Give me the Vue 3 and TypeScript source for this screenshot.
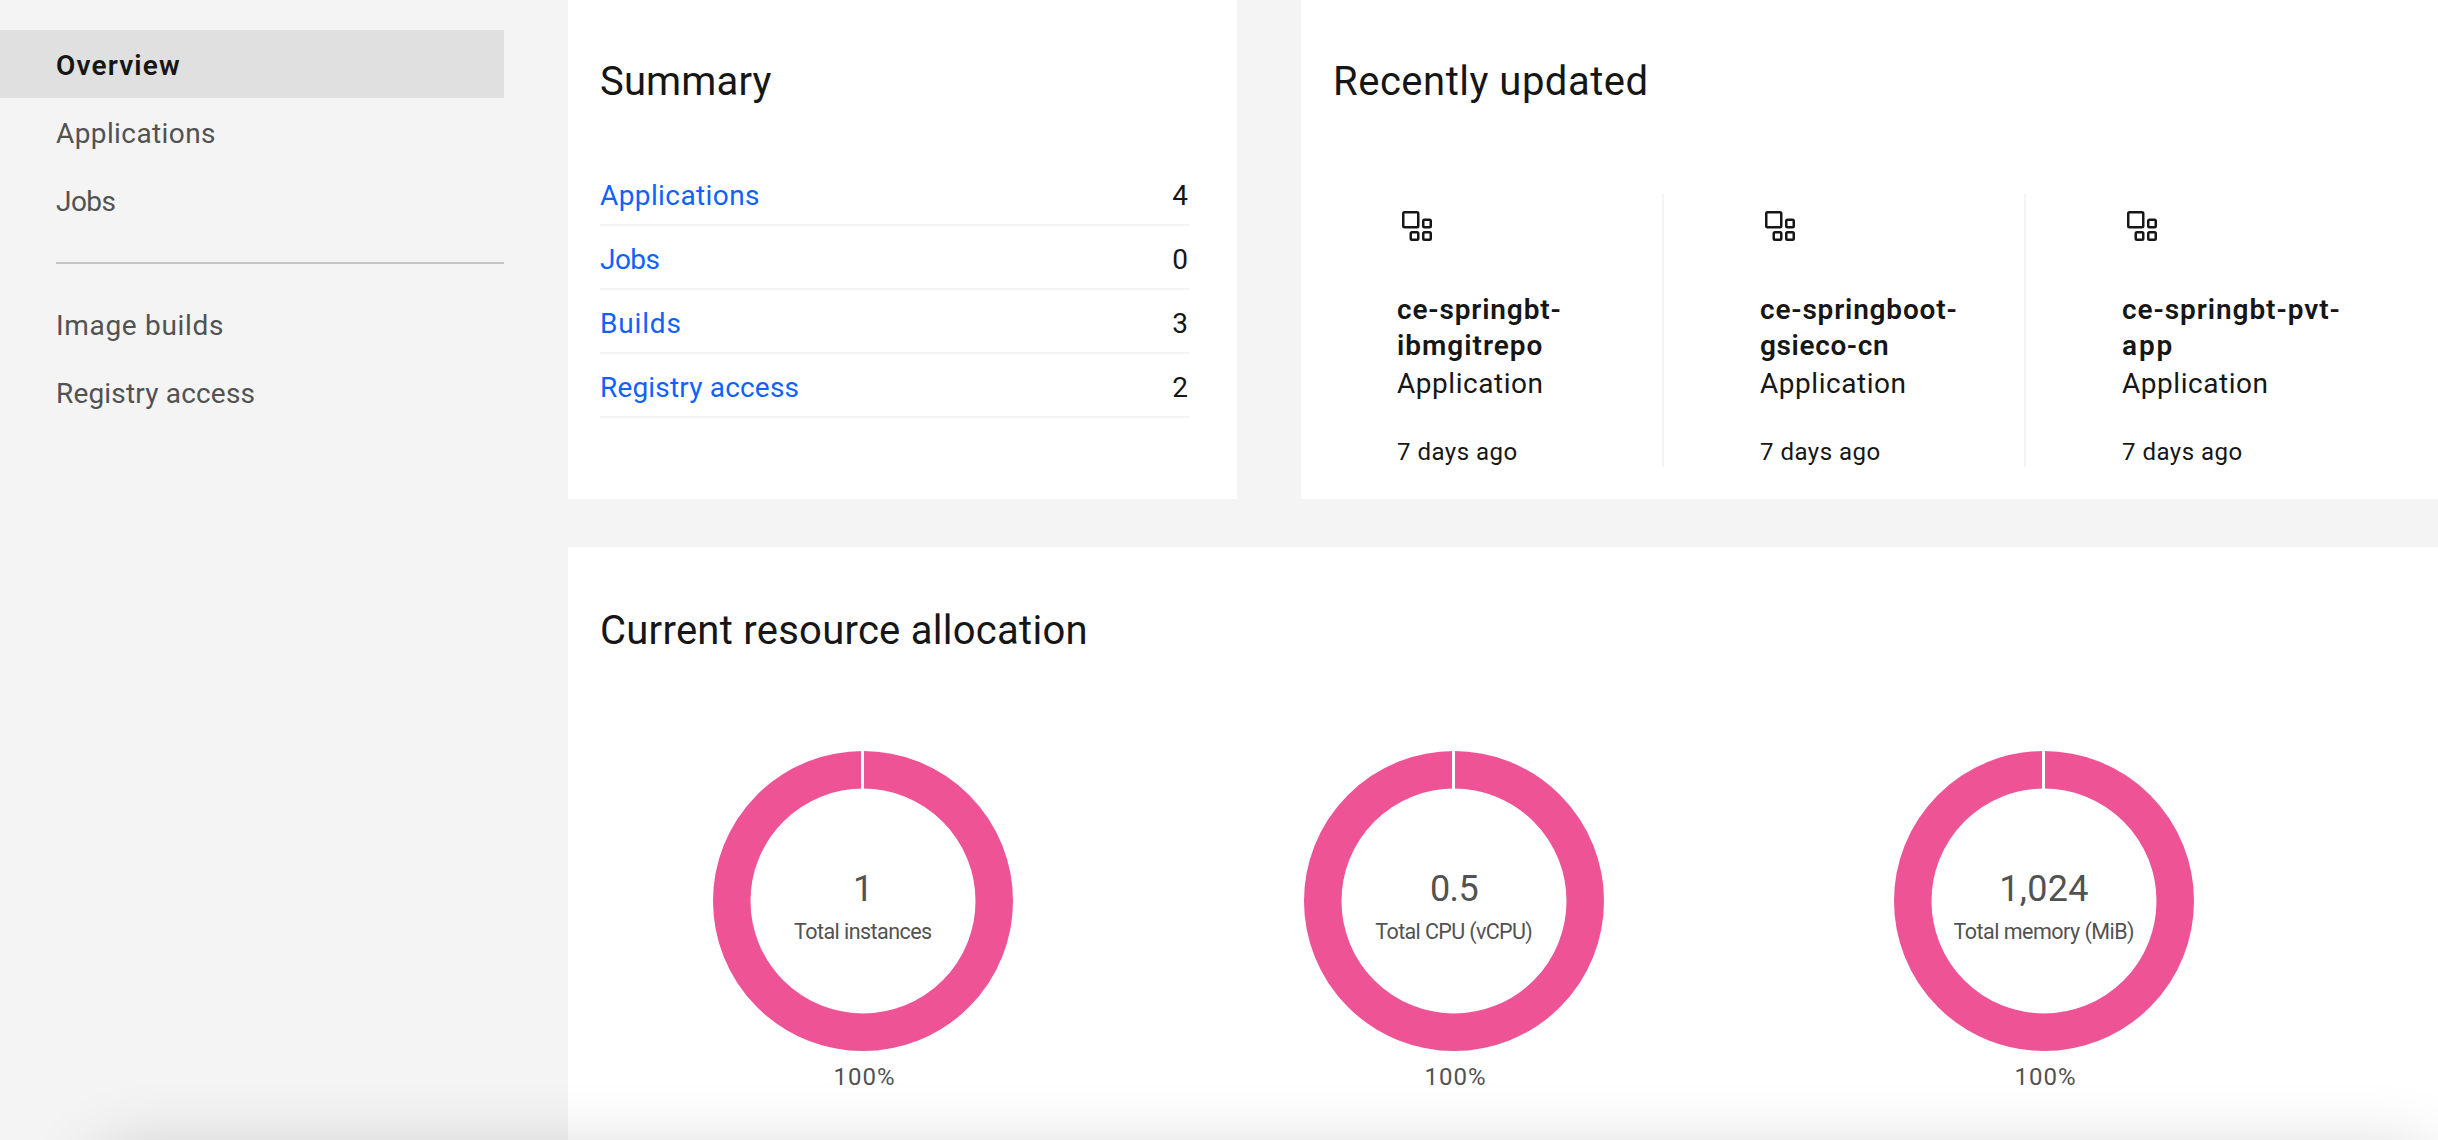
<script setup lang="ts">
import type { Directive } from 'vue'

interface Label {
  text: string
  width: number
}
interface SummaryRow extends Label {
  count: number
}
interface RecentItem {
  name: Label[]
  kind: Label
  updated: Label
}
interface Chart {
  value: string
  valueWidth: number
  label: string
  labelWidth: number
}

// Spreads the letters of a text so that its ink spans the given width in pixels.
const vTrack: Directive<HTMLElement | SVGTextElement, number> = {
  mounted(el, binding) {
    const text = (el.textContent ?? '').trim()
    const ctx = document.createElement('canvas').getContext('2d')
    if (!ctx || text.length < 2) return
    const style = getComputedStyle(el)
    ctx.font = `${style.fontWeight} ${style.fontSize} ${style.fontFamily}`
    const m = ctx.measureText(text)
    const ink = m.actualBoundingBoxLeft + m.actualBoundingBoxRight
    el.style.letterSpacing = `${((binding.value - ink) / (text.length - 1)).toFixed(3)}px`
  },
}

const primaryNav: (Label & { active?: boolean })[] = [
  { text: 'Overview', width: 123, active: true },
  { text: 'Applications', width: 159 },
  { text: 'Jobs', width: 59.5 },
]
const secondaryNav: Label[] = [
  { text: 'Image builds', width: 165 },
  { text: 'Registry access', width: 196.5 },
]

const summary: SummaryRow[] = [
  { text: 'Applications', width: 159, count: 4 },
  { text: 'Jobs', width: 59.5, count: 0 },
  { text: 'Builds', width: 78.5, count: 3 },
  { text: 'Registry access', width: 196.5, count: 2 },
]

const kind: Label = { text: 'Application', width: 144.5 }
const updated: Label = { text: '7 days ago', width: 119.5 }
const recent: RecentItem[] = [
  { name: [{ text: 'ce-springbt-', width: 162.5 }, { text: 'ibmgitrepo', width: 143.5 }], kind, updated },
  { name: [{ text: 'ce-springboot-', width: 195.5 }, { text: 'gsieco-cn', width: 127 }], kind, updated },
  { name: [{ text: 'ce-springbt-pvt-', width: 216.5 }, { text: 'app', width: 48.5 }], kind, updated },
]

const charts: Chart[] = [
  { value: '1', valueWidth: 16, label: 'Total instances', labelWidth: 138 },
  { value: '0.5', valueWidth: 45.5, label: 'Total CPU (vCPU)', labelWidth: 156 },
  { value: '1,024', valueWidth: 86, label: 'Total memory (MiB)', labelWidth: 179.5 },
]
</script>

<template>
  <div class="page">
    <nav class="side">
      <a v-for="n in primaryNav" :key="n.text" class="nav-item" :class="{ active: n.active }">
        <span v-track="n.width">{{ n.text }}</span>
      </a>
      <div class="nav-rule"></div>
      <a v-for="n in secondaryNav" :key="n.text" class="nav-item">
        <span v-track="n.width">{{ n.text }}</span>
      </a>
    </nav>

    <main class="main">
      <div class="top-row">
        <section class="card summary">
          <h2 class="title"><span v-track="170.5">Summary</span></h2>
          <div class="rows">
            <div v-for="r in summary" :key="r.text" class="row">
              <a v-track="r.width" class="link">{{ r.text }}</a>
              <span class="count">{{ r.count }}</span>
            </div>
          </div>
        </section>

        <section class="card recent">
          <h2 class="title"><span v-track="309.5">Recently updated</span></h2>
          <div class="tiles">
            <article v-for="(item, i) in recent" :key="i" class="tile">
              <svg class="icon" viewBox="0 0 32 32" width="40" height="40" fill="#161616">
                <path d="M16 18H6a2 2 0 0 1-2-2V6a2 2 0 0 1 2-2h10a2 2 0 0 1 2 2v10a2 2 0 0 1-2 2ZM6 6v10h10V6Z" />
                <path d="M26 12v4h-4v-4h4m0-2h-4a2 2 0 0 0-2 2v4a2 2 0 0 0 2 2h4a2 2 0 0 0 2-2v-4a2 2 0 0 0-2-2Z" />
                <path d="M26 22v4h-4v-4h4m0-2h-4a2 2 0 0 0-2 2v4a2 2 0 0 0 2 2h4a2 2 0 0 0 2-2v-4a2 2 0 0 0-2-2Z" />
                <path d="M16 22v4h-4v-4h4m0-2h-4a2 2 0 0 0-2 2v4a2 2 0 0 0 2 2h4a2 2 0 0 0 2-2v-4a2 2 0 0 0-2-2Z" />
              </svg>
              <div class="name">
                <div v-for="l in item.name" :key="l.text" v-track="l.width">{{ l.text }}</div>
              </div>
              <div v-track="item.kind.width" class="kind">{{ item.kind.text }}</div>
              <div v-track="item.updated.width" class="updated">{{ item.updated.text }}</div>
            </article>
          </div>
        </section>
      </div>

      <section class="card allocation">
        <h2 class="title"><span v-track="483.5">Current resource allocation</span></h2>
        <div class="charts">
          <svg v-for="c in charts" :key="c.label" class="chart" width="300" height="345" viewBox="0 0 300 345">
            <circle cx="150" cy="150" r="131.25" fill="none" stroke="#ee5396" stroke-width="37.5" />
            <rect x="148" y="-1" width="3" height="40" fill="#fff" />
            <text v-track="c.valueWidth" class="value" x="150" y="150">{{ c.value }}</text>
            <text v-track="c.labelWidth" class="label" x="149.8" y="188">{{ c.label }}</text>
            <text v-track="58.5" class="percent" x="151.5" y="334">100%</text>
          </svg>
        </div>
      </section>
    </main>
    <div class="shade"></div>
  </div>
</template>

<style>
body {
  background: #f4f4f4;
}
</style>

<style scoped>
.page {
  position: relative;
  display: flex;
  width: 2438px;
  height: 1140px;
  overflow: hidden;
  background: #f4f4f4;
  color: #161616;
  font-family: Roboto, "Liberation Sans", sans-serif;
  font-size: 28px;
}
.page * {
  box-sizing: border-box;
}
.side {
  flex: none;
  width: 504px;
  padding-top: 30px;
}
.nav-item {
  display: block;
  height: 68px;
  padding: 3px 0 0 56px;
  line-height: 65px;
  color: #525252;
  white-space: nowrap;
}
.nav-item.active {
  background: #e0e0e0;
  color: #161616;
  font-weight: 600;
}
.nav-rule {
  height: 2px;
  margin: 28px 0 26px 56px;
  background: #c6c6c6;
}
.main {
  display: flex;
  flex: 1;
  flex-direction: column;
  gap: 48px;
  margin-left: 64px;
}
.top-row {
  display: flex;
  gap: 64px;
  height: 499px;
}
.card {
  background: #fff;
}
.title {
  margin: 0;
  padding: 58px 0 0 32px;
  font-size: 40px;
  font-weight: 400;
  line-height: 48px;
  white-space: nowrap;
}
.summary {
  flex: none;
  width: 669px;
}
.rows {
  margin: 56px 48px 0 32px;
}
.row {
  display: flex;
  justify-content: space-between;
  height: 64px;
  padding-top: 5px;
  border-bottom: 2px solid #f4f4f4;
  line-height: 57px;
}
.link {
  color: #0f62fe;
}
.count {
  padding-right: 1px;
}
.recent {
  flex: 1;
}
.tiles {
  display: flex;
  height: 273px;
  margin-top: 88px;
}
.tile {
  flex: none;
  width: 362px;
  padding: 12px 0 0 96px;
  border-right: 2px solid #f4f4f4;
  white-space: nowrap;
}
.tile:first-child {
  width: 363px;
}
.tile:last-child {
  border-right: 0;
}
.icon {
  display: block;
}
.name {
  margin-top: 46px;
  font-weight: 600;
  line-height: 36px;
}
.kind {
  margin-top: 2px;
  line-height: 36px;
}
.updated {
  margin-top: 34px;
  font-size: 24px;
  line-height: 32px;
}
.allocation {
  flex: 1;
}
.allocation .title {
  padding-top: 60px;
}
.charts {
  display: flex;
  gap: 290px;
  margin: 96px 0 0 145px;
}
.chart {
  display: block;
  flex: none;
}
.chart:first-child {
  margin-right: 1px;
}
.chart text {
  fill: #525252;
  text-anchor: middle;
}
.value {
  font-size: 36px;
}
.label {
  font-size: 21.5px;
}
.percent {
  font-size: 24px;
}
.shade {
  position: absolute;
  top: 1156px;
  left: 98px;
  width: 2332px;
  height: 400px;
  border-radius: 20px;
  box-shadow: 0 0 75px rgba(0, 0, 0, 0.2);
}
</style>
